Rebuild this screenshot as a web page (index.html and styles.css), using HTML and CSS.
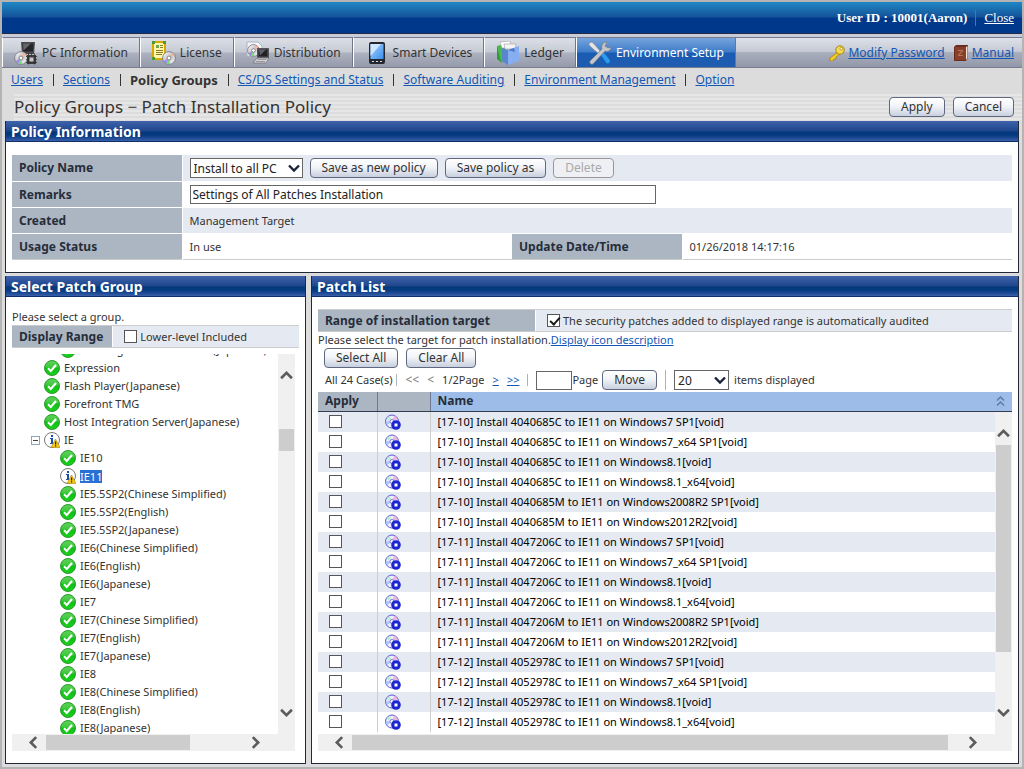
FILE: index.html
```
<!DOCTYPE html>
<html lang="en">
<head>
    <meta charset="UTF-8">
    <meta name="viewport" content="width=device-width, initial-scale=1.0">
    <title>Policy Groups - Patch Installation Policy</title>
    <link rel="stylesheet" href="styles.css">
</head>
<body>
    <!-- shared icons -->
    <svg class="defs" width="0" height="0">
        <defs>
            <linearGradient id="green" x1="0" y1="0" x2="0" y2="1">
                <stop offset="0" stop-color="#5fd35a"/>
                <stop offset=".45" stop-color="#3cc83c"/>
                <stop offset=".5" stop-color="#0fbf14"/>
                <stop offset="1" stop-color="#18d21c"/>
            </linearGradient>
            <linearGradient id="silver" x1="0" y1="0" x2="1" y2="1">
                <stop offset="0" stop-color="#ffffff"/>
                <stop offset=".5" stop-color="#c4c4ca"/>
                <stop offset="1" stop-color="#ffffff"/>
            </linearGradient>
            <linearGradient id="screen" x1="0" y1="0" x2="1" y2="1">
                <stop offset="0" stop-color="#a8d4ff"/>
                <stop offset="1" stop-color="#3a8eee"/>
            </linearGradient>
            <symbol id="ok" viewBox="0 0 16 16">
                <circle cx="8" cy="8" r="7.5" fill="url(#green)" stroke="#2c9a2c"/>
                <path d="M4 8.2l2.8 2.8L12 5" fill="none" stroke="#fff" stroke-width="2.2"/>
            </symbol>
            <symbol id="info" viewBox="0 0 16 16">
                <circle cx="8" cy="8" r="7.5" fill="#fff" stroke="#777"/>
                <path d="M7 3h2v2H7zM6 6h3v5h1v1H6v-1h1V7H6z" fill="#1450b4"/>
                <path d="M11.500 7L16 15.500H7z" fill="#f5c812" stroke="#a88400" stroke-width=".6"/>
                <path d="M11 9.500h1.200v3H11zM11 13.300h1.200v1.200H11z" fill="#222"/>
            </symbol>
            <symbol id="patch" viewBox="0 0 16 16">
                <circle cx="7" cy="7.500" r="6.500" fill="#f0ecff" stroke="#5a5ad0"/>
                <path d="M7 7.500L1.500 5A6 6 0 0 1 5 2z" fill="#b9f0d0"/>
                <path d="M7 7.500L9 1.800a6 6 0 0 1 3.600 3.400z" fill="#f0b4e4"/>
                <path d="M7 7.500L2 11a6 6 0 0 1-1-4z" fill="#a8c8ff"/>
                <circle cx="7" cy="7.500" r="2" fill="#fff" stroke="#7a7ad8"/>
                <circle cx="11" cy="11" r="4.800" fill="#1c24d0"/>
                <path d="M9.500 9.500h3v3h-3z" fill="#fff"/>
            </symbol>
            <symbol id="disc" viewBox="0 0 16 16">
                <circle cx="8" cy="8" r="7.300" fill="url(#silver)" stroke="#77777c"/>
                <path d="M8 8L2 11.500A7 7 0 0 0 5 14.400z" fill="#a486ec"/>
                <path d="M8 8l-3 6.400a7 7 0 0 0 4 .5z" fill="#78d882"/>
                <path d="M8 8l3-6.400a7 7 0 0 1 3 3z" fill="#f6b49c"/>
                <circle cx="8" cy="8" r="2.200" fill="#fff" stroke="#777"/>
            </symbol>
            <symbol id="chev" viewBox="0 0 12 12">
                <path d="M1 8.500l5-5 5 5" fill="none" stroke="#5c5c5c" stroke-width="2.400"/>
            </symbol>
            <symbol id="drop" viewBox="0 0 12 12">
                <path d="M1 3.500l5 5 5-5" fill="none" stroke="#1a2438" stroke-width="2.400"/>
            </symbol>
        </defs>
    </svg>

    <header class="header">
        <span>User ID : 10001(Aaron)</span>
        <a href="#">Close</a>
    </header>

    <nav class="tabs">
        <a href="#" class="tab">
            <svg width="24" height="24" viewBox="0 0 24 24">
                <path d="M7 1h14l-1 12H8z" fill="#4a4a4e"/>
                <path d="M8.500 2.500h11l-.6 8h-9.800z" fill="#26262a"/>
                <path d="M9 2.500h8l-7.500 7z" fill="#66666c"/>
                <path d="M7 13h13l1 3H6z" fill="#bdbdc2"/>
                <use href="#disc" x="0" y="10" width="14" height="14"/>
                <path d="M13 14h9v9h-9z" fill="#3c3c40"/>
                <path d="M15.500 16.500h4v4h-4z" fill="#c8c8cc"/>
                <path d="M14.500 12.500v11M17.500 12.500v2M20.500 12.500v11M12 15.500h3M20 15.500h3M12 18.500h3M20 18.500h3M12 21.500h11" stroke="#333" stroke-width=".8"/>
            </svg>
            PC Information
        </a>
        <a href="#" class="tab">
            <svg width="24" height="24" viewBox="0 0 24 24">
                <path d="M1 1h12v17H1z" fill="#fff6b0" stroke="#d8a800" stroke-width="2"/>
                <path d="M0 0h3v3H0zM11 0h3v3h-3zM0 16h3v3H0z" fill="#4a9a3c"/>
                <path d="M4 4h3v3H4z" fill="#6aa84f"/>
                <path d="M8 4.500h3M8 6.500h3M4 9.500h7M4 11.500h7M4 13.500h6" stroke="#8a7a20"/>
                <use href="#disc" x="10" y="10" width="14" height="14"/>
            </svg>
            License
        </a>
        <a href="#" class="tab">
            <svg width="24" height="24" viewBox="0 0 24 24">
                <path d="M1 1h11l4 4v10H1z" fill="#f4f6f8" stroke="#aab4c0"/>
                <use href="#disc" x="1" y="3" width="13" height="13"/>
                <path d="M11 7h12v10H11z" fill="#55555a"/>
                <path d="M12.500 8.500h9v7h-9z" fill="#222226"/>
                <path d="M13 8.500h7l-6 6z" fill="#606068"/>
                <path d="M11 17h12l-3 5H7z" fill="#d4d4d8" stroke="#77777c" stroke-width=".8"/>
                <path d="M11.500 18.500h9M10 20.500h9" stroke="#88888c" stroke-width=".8"/>
            </svg>
            Distribution
        </a>
        <a href="#" class="tab">
            <svg width="24" height="24" viewBox="0 0 24 24">
                <rect x="4" y="1" width="16" height="22" rx="2" fill="#24282e"/>
                <path d="M5.500 3h13v15h-13z" fill="url(#screen)"/>
                <path d="M5.500 3H16L5.500 15z" fill="#cfe6ff"/>
                <path d="M7 20.500h2M11 20.500h2M15 20.500h2" stroke="#ddd"/>
            </svg>
            Smart Devices
        </a>
        <a href="#" class="tab">
            <svg width="24" height="24" viewBox="0 0 24 24">
                <path d="M1 5l5 2v15l-5-4z" fill="#2f9a3a"/>
                <path d="M1 5l3-1 5 3v14H5z" fill="#4cb850"/>
                <path d="M4 1l10-1 1 7H6z" fill="#fff" stroke="#aaa" stroke-width=".7"/>
                <path d="M8 3l12 0-1 5H9z" fill="#f4f4f4" stroke="#aaa" stroke-width=".7"/>
                <path d="M6 7l6 2v15l-6-4z" fill="#5a86cc"/>
                <path d="M12 9l11-4v15l-11 4z" fill="#86aef0"/>
                <path d="M12 9l6-2 1 4z" fill="#4a78c8"/>
            </svg>
            Ledger
        </a>
        <a href="#" class="tab active">
            <svg width="24" height="24" viewBox="0 0 24 24">
                <path d="M1 2l3-1 3 3 6 7-2 2-7-6-3-3z" fill="#e4e4e4" stroke="#8a8a90" stroke-width=".7"/>
                <path d="M12 13l3-3 7 9c1 2-2 5-4 3z" fill="#2a9cf4" stroke="#1262b0" stroke-width=".7"/>
                <path d="M23 6c0 4-4 5-6 4L5 23c-2 1-4-1-3-3L14 8c-1-4 1-7 5-7l-2 4 3 2z" fill="#c4c6ca" stroke="#77797f" stroke-width=".7"/>
            </svg>
            Environment Setup
        </a>
        <div class="tools">
            <a href="#">
                <svg width="16" height="16" viewBox="0 0 16 16">
                    <path d="M9 7L1 13v3h3l1-2h2v-2l4-3z" fill="#f2cc2c" stroke="#a8820c" stroke-width=".8"/>
                    <circle cx="11" cy="5" r="4.200" fill="#f8dc50" stroke="#a8820c"/>
                    <circle cx="12.300" cy="3.700" r="1.300" fill="#fff" stroke="#a8820c" stroke-width=".7"/>
                </svg>
                <span>Modify Password</span>
            </a>
            <a href="#">
                <svg width="16" height="16" viewBox="0 0 16 16">
                    <path d="M1 2l2-2h12v13l-2 3H1z" fill="#6b2c1e"/>
                    <path d="M13 2l1.500-1v12L13 15z" fill="#efe6d8"/>
                    <path d="M2 2h11v13H2z" fill="#8a3e2c"/>
                    <path d="M5 5h5v1L6.500 10H10v1H5v-1l3.500-4H5z" fill="#b07848"/>
                </svg>
                <span>Manual</span>
            </a>
        </div>
    </nav>

    <nav class="subnav">
        <a href="#">Users</a>
        <a href="#">Sections</a>
        <b>Policy Groups</b>
        <a href="#">CS/DS Settings and Status</a>
        <a href="#">Software Auditing</a>
        <a href="#">Environment Management</a>
        <a href="#">Option</a>
    </nav>

    <div class="page-title">
        <h1>Policy Groups − Patch Installation Policy</h1>
        <button type="button">Apply</button>
        <button type="button">Cancel</button>
    </div>

    <main>
        <section class="panel">
            <h2>Policy Information</h2>
            <div class="panel-body">
                <table class="info">
                    <tr class="odd first">
                        <th><label for="policy">Policy Name</label></th>
                        <td colspan="3">
                            <div class="controls">
                                <span class="select policy-select">
                                    <select id="policy"><option>Install to all PC</option></select>
                                    <svg width="12" height="12"><use href="#drop"/></svg>
                                </span>
                                <button type="button">Save as new policy</button>
                                <button type="button">Save policy as</button>
                                <button type="button" disabled>Delete</button>
                            </div>
                        </td>
                    </tr>
                    <tr>
                        <th><label for="remarks">Remarks</label></th>
                        <td colspan="3"><input type="text" id="remarks" value="Settings of All Patches Installation"></td>
                    </tr>
                    <tr class="odd">
                        <th>Created</th>
                        <td colspan="3">Management Target</td>
                    </tr>
                    <tr>
                        <th>Usage Status</th>
                        <td class="third">In use</td>
                        <th>Update Date/Time</th>
                        <td class="third">01/26/2018 14:17:16</td>
                    </tr>
                </table>
            </div>
        </section>

        <div class="columns">
            <section class="panel groups">
                <h2>Select Patch Group</h2>
                <div class="panel-body">
                    <p>Please select a group.</p>
                    <div class="option-row">
                        <b>Display Range</b>
                        <label><input type="checkbox">Lower-level Included</label>
                    </div>
                    <div class="scroll-box">
                        <ul class="tree">
                            <li class="sub"><svg><use href="#ok"/></svg>Exchange Server V5.5 SP4(Japanese)</li>
                            <li><svg><use href="#ok"/></svg>Expression</li>
                            <li><svg><use href="#ok"/></svg>Flash Player(Japanese)</li>
                            <li><svg><use href="#ok"/></svg>Forefront TMG</li>
                            <li><svg><use href="#ok"/></svg>Host Integration Server(Japanese)</li>
                            <li class="open"><button type="button" class="toggle" aria-label="Collapse IE"></button><svg><use href="#info"/></svg>IE</li>
                            <li class="sub"><svg><use href="#ok"/></svg>IE10</li>
                            <li class="sub"><svg><use href="#info"/></svg><span class="selected">IE11</span></li>
                            <li class="sub"><svg><use href="#ok"/></svg>IE5.5SP2(Chinese Simplified)</li>
                            <li class="sub"><svg><use href="#ok"/></svg>IE5.5SP2(English)</li>
                            <li class="sub"><svg><use href="#ok"/></svg>IE5.5SP2(Japanese)</li>
                            <li class="sub"><svg><use href="#ok"/></svg>IE6(Chinese Simplified)</li>
                            <li class="sub"><svg><use href="#ok"/></svg>IE6(English)</li>
                            <li class="sub"><svg><use href="#ok"/></svg>IE6(Japanese)</li>
                            <li class="sub"><svg><use href="#ok"/></svg>IE7</li>
                            <li class="sub"><svg><use href="#ok"/></svg>IE7(Chinese Simplified)</li>
                            <li class="sub"><svg><use href="#ok"/></svg>IE7(English)</li>
                            <li class="sub"><svg><use href="#ok"/></svg>IE7(Japanese)</li>
                            <li class="sub"><svg><use href="#ok"/></svg>IE8</li>
                            <li class="sub"><svg><use href="#ok"/></svg>IE8(Chinese Simplified)</li>
                            <li class="sub"><svg><use href="#ok"/></svg>IE8(English)</li>
                            <li class="sub"><svg><use href="#ok"/></svg>IE8(Japanese)</li>
                        </ul>
                        <div class="vbar">
                            <svg><use href="#chev"/></svg>
                            <div class="track"><i class="thumb"></i></div>
                            <svg class="down"><use href="#chev"/></svg>
                        </div>
                    </div>
                    <div class="hbar">
                        <svg class="left"><use href="#chev"/></svg>
                        <div class="track"><i class="thumb"></i></div>
                        <svg class="right"><use href="#chev"/></svg>
                    </div>
                </div>
            </section>

            <section class="panel patches">
                <h2>Patch List</h2>
                <div class="panel-body">
                    <div class="option-row">
                        <b>Range of installation target</b>
                        <label><input type="checkbox" checked>The security patches added to displayed range is automatically audited</label>
                    </div>
                    <p>Please select the target for patch installation.<a href="#">Display icon description</a></p>
                    <div class="controls">
                        <button type="button">Select All</button>
                        <button type="button">Clear All</button>
                    </div>
                    <div class="paging">
                        <span class="cases">All 24 Case(s)</span>
                        <span class="dim">&lt;&lt;</span>
                        <span class="dim">&lt;</span>
                        <span>1/2Page</span>
                        <a href="#">&gt;</a>
                        <a href="#" class="last">&gt;&gt;</a>
                        <span class="goto"><input type="text" id="page"><label for="page">Page</label><button type="button">Move</button></span>
                        <span class="select">
                            <select id="count"><option>20</option></select>
                            <svg width="12" height="12"><use href="#drop"/></svg>
                        </span>
                        <label for="count">items displayed</label>
                    </div>
                    <table class="list list-head">
                        <colgroup><col class="c-apply"><col class="c-icon"><col></colgroup>
                        <tr>
                            <th>Apply</th>
                            <th></th>
                            <th class="sorted">
                                <div>Name
                                    <svg width="9" height="12" viewBox="0 0 9 12"><path d="M1 5.500L4.500 2 8 5.500M1 10.500L4.500 7 8 10.500" fill="none" stroke="#5d7ba8" stroke-width="1.500"/></svg>
                                </div>
                            </th>
                        </tr>
                    </table>
                    <div class="scroll-box">
                        <div class="rows">
                            <table class="list">
                                <colgroup><col class="c-apply"><col class="c-icon"><col></colgroup>
                                <tr><td><input type="checkbox" id="p1"></td><td><svg><use href="#patch"/></svg></td><td><label for="p1">[17-10] Install 4040685C to IE11 on Windows7 SP1[void]</label></td></tr>
                                <tr><td><input type="checkbox" id="p2"></td><td><svg><use href="#patch"/></svg></td><td><label for="p2">[17-10] Install 4040685C to IE11 on Windows7_x64 SP1[void]</label></td></tr>
                                <tr><td><input type="checkbox" id="p3"></td><td><svg><use href="#patch"/></svg></td><td><label for="p3">[17-10] Install 4040685C to IE11 on Windows8.1[void]</label></td></tr>
                                <tr><td><input type="checkbox" id="p4"></td><td><svg><use href="#patch"/></svg></td><td><label for="p4">[17-10] Install 4040685C to IE11 on Windows8.1_x64[void]</label></td></tr>
                                <tr><td><input type="checkbox" id="p5"></td><td><svg><use href="#patch"/></svg></td><td><label for="p5">[17-10] Install 4040685M to IE11 on Windows2008R2 SP1[void]</label></td></tr>
                                <tr><td><input type="checkbox" id="p6"></td><td><svg><use href="#patch"/></svg></td><td><label for="p6">[17-10] Install 4040685M to IE11 on Windows2012R2[void]</label></td></tr>
                                <tr><td><input type="checkbox" id="p7"></td><td><svg><use href="#patch"/></svg></td><td><label for="p7">[17-11] Install 4047206C to IE11 on Windows7 SP1[void]</label></td></tr>
                                <tr><td><input type="checkbox" id="p8"></td><td><svg><use href="#patch"/></svg></td><td><label for="p8">[17-11] Install 4047206C to IE11 on Windows7_x64 SP1[void]</label></td></tr>
                                <tr><td><input type="checkbox" id="p9"></td><td><svg><use href="#patch"/></svg></td><td><label for="p9">[17-11] Install 4047206C to IE11 on Windows8.1[void]</label></td></tr>
                                <tr><td><input type="checkbox" id="p10"></td><td><svg><use href="#patch"/></svg></td><td><label for="p10">[17-11] Install 4047206C to IE11 on Windows8.1_x64[void]</label></td></tr>
                                <tr><td><input type="checkbox" id="p11"></td><td><svg><use href="#patch"/></svg></td><td><label for="p11">[17-11] Install 4047206M to IE11 on Windows2008R2 SP1[void]</label></td></tr>
                                <tr><td><input type="checkbox" id="p12"></td><td><svg><use href="#patch"/></svg></td><td><label for="p12">[17-11] Install 4047206M to IE11 on Windows2012R2[void]</label></td></tr>
                                <tr><td><input type="checkbox" id="p13"></td><td><svg><use href="#patch"/></svg></td><td><label for="p13">[17-12] Install 4052978C to IE11 on Windows7 SP1[void]</label></td></tr>
                                <tr><td><input type="checkbox" id="p14"></td><td><svg><use href="#patch"/></svg></td><td><label for="p14">[17-12] Install 4052978C to IE11 on Windows7_x64 SP1[void]</label></td></tr>
                                <tr><td><input type="checkbox" id="p15"></td><td><svg><use href="#patch"/></svg></td><td><label for="p15">[17-12] Install 4052978C to IE11 on Windows8.1[void]</label></td></tr>
                                <tr><td><input type="checkbox" id="p16"></td><td><svg><use href="#patch"/></svg></td><td><label for="p16">[17-12] Install 4052978C to IE11 on Windows8.1_x64[void]</label></td></tr>
                            </table>
                        </div>
                        <div class="vbar">
                            <svg><use href="#chev"/></svg>
                            <div class="track"><i class="thumb"></i></div>
                            <svg class="down"><use href="#chev"/></svg>
                        </div>
                    </div>
                    <div class="hbar">
                        <svg class="left"><use href="#chev"/></svg>
                        <div class="track"><i class="thumb"></i></div>
                        <svg class="right"><use href="#chev"/></svg>
                    </div>
                </div>
            </section>
        </div>
    </main>
</body>
</html>
```
FILE: styles.css
```
* {
    box-sizing: border-box;
    margin: 0;
    padding: 0;
}
body {
    display: flex;
    flex-direction: column;
    height: 100vh;
    min-height: 600px;
    border: 2px solid #b4b4b4;
    background-color: #dcdcdc;
    font: 11px/16px "Noto Sans", "Open Sans", sans-serif;
    color: #333;
    overflow: hidden;
}
.defs {
    position: absolute;
}
a {
    color: #1257b4;
}
svg {
    flex: none;
}

/* header */
.header {
    display: flex;
    justify-content: flex-end;
    align-items: center;
    gap: 8px;
    height: 32px;
    padding-right: 8px;
    background: linear-gradient(#1f87c4, #15539a 48%, #00398b 52%, #00398b);
    border-bottom: 1px solid #222c48;
    font: bold 13px "Liberation Serif", serif;
    color: #fff;
}
.header a {
    color: #fff;
    padding-left: 8px;
    border-left: 1px solid #3b78bc;
    font-weight: normal;
}

/* main tabs */
.tabs {
    display: flex;
    height: 34px;
    border-top: 3px solid #c9cbd8;
    border-bottom: 1px solid #777e90;
    background: linear-gradient(#dfe2ea, #c6cad4 48%, #a9aebd 52%, #9298a9);
}
.tab {
    display: flex;
    align-items: center;
    gap: 4px;
    padding: 0 11px;
    border-top: 1px solid #747a90;
    border-right: 1px solid #6f7688;
    border-left: 1px solid #fff;
    background: linear-gradient(#dcdfe7, #c6cad4 48%, #adb2c0 52%, #949aab);
    color: #333;
    font-size: 12px;
    text-decoration: none;
}
.tab.active {
    background: linear-gradient(#76a4dd, #3f7cc8 48%, #1a5cb4 52%, #1f5cb0);
    color: #fff;
}
.tools {
    display: flex;
    flex: 1;
    justify-content: flex-end;
    align-items: center;
    gap: 8px;
    padding-right: 8px;
    border-top: 1px solid #747a90;
    font-size: 12px;
}
.tools a {
    display: flex;
    align-items: center;
    gap: 3px;
}

/* sub navigation */
.subnav {
    display: flex;
    align-items: center;
    height: 24px;
    padding-left: 9px;
    font-size: 12px;
    line-height: 12px;
}
.subnav > * + * {
    margin-left: 10px;
    padding-left: 9px;
    border-left: 1px solid #333;
}
.subnav b {
    font-size: 13px;
}

.page-title {
    display: flex;
    align-items: center;
    gap: 8px;
    height: 29px;
    margin-left: 12px;
    padding-right: 8px;
    background: repeating-linear-gradient(#dcdcdc 0 2px, #e6e6e6 2px 4px);
}
.page-title h1 {
    flex: 1;
    font-size: 17px;
    font-weight: normal;
}

/* form controls */
button {
    height: 20px;
    padding: 0 11px;
    border: 1px solid #5f6880;
    border-radius: 4px;
    background: linear-gradient(#fff, #f2f4f8 45%, #c8d0df);
    font: 12px/16px "Noto Sans", "Open Sans", sans-serif;
    color: #333;
}
button:disabled {
    border-color: #999;
    background: #eef0f4;
    color: #aaa;
}
.select {
    display: inline-grid;
    align-items: center;
}
.select > * {
    grid-area: 1 / 1;
}
.select svg {
    justify-self: end;
    margin-right: 3px;
    pointer-events: none;
}
select {
    appearance: none;
    height: 20px;
    padding: 0 3px;
    border: 1px solid #666;
    background-color: #fff;
    font: 12px "Noto Sans", "Open Sans", sans-serif;
    color: #222;
}
input[type="text"] {
    height: 19px;
    padding: 0 2px;
    border: 1px solid #666;
    background-color: #fff;
    font: 12px "Noto Sans", "Open Sans", sans-serif;
    color: #222;
}
input[type="checkbox"] {
    appearance: none;
    display: block;
    flex: none;
    width: 13px;
    height: 13px;
    border: 1px solid #555;
    background-color: #fff;
}
input[type="checkbox"]:checked::before {
    content: "";
    display: block;
    width: 4px;
    height: 8px;
    margin-left: 4px;
    border: solid #1a1a1a;
    border-width: 0 2px 2px 0;
    transform: rotate(42deg);
}
.controls {
    display: flex;
    align-items: center;
    gap: 8px;
}

/* panels */
main {
    display: flex;
    flex-direction: column;
    flex: 1;
    gap: 3px;
    min-height: 0;
    padding: 0 3px 3px;
}
.columns {
    display: flex;
    flex: 1;
    gap: 5px;
    min-height: 0;
}
.panel {
    display: flex;
    flex-direction: column;
    min-width: 0;
    border: 1px solid #232838;
    border-top: 0;
    background-color: #fff;
}
.panel h2 {
    height: 21px;
    padding-left: 5px;
    border-bottom: 1px solid #0f2f6c;
    background: linear-gradient(#3f63aa, #1e458c 50%, #003878 55%, #0a3c86 75%, #3a5fa8);
    font-size: 14px;
    line-height: 21px;
    color: #fff;
}
.panel-body {
    display: flex;
    flex-direction: column;
    flex: 1;
    min-height: 0;
    padding: 12px 6px;
}
.info {
    width: 100%;
    border-collapse: collapse;
    border-top: 1px solid #ccc;
    border-bottom: 1px solid #ccc;
}
.info th,
.info td {
    height: 26px;
    padding: 0 7px;
    border-top: 1px solid #fff;
    text-align: left;
}
.info .first th,
.info .first td {
    height: 27px;
}
.info th {
    width: 170px;
    border-right: 1px solid #fff;
    background-color: #acb6c2;
    font-size: 12px;
    color: #262d3a;
}
.info .third {
    width: 33%;
}
.info .odd td {
    background-color: #e5e9f1;
}
.info input {
    display: block;
    width: 466px;
}
.info .controls {
    gap: 7px;
}
.policy-select {
    width: 113px;
}

.groups {
    width: 301px;
}
.patches {
    flex: 1;
}
.groups p {
    line-height: 17px;
}
.option-row {
    display: flex;
    border: 1px solid #ccc;
    border-width: 1px 0;
    background-color: #e5e9f1;
    line-height: 21px;
}
.option-row b {
    padding: 0 9px 0 7px;
    border-right: 1px solid #fff;
    background-color: #acb6c2;
    font-size: 12px;
    color: #262d3a;
}
.option-row label {
    display: flex;
    align-items: center;
    gap: 3px;
    padding-left: 11px;
}
.patches .option-row b {
    width: 218px;
}
.patches p {
    line-height: 16px;
}
.patches .controls {
    padding-left: 6px;
}

.scroll-box {
    display: flex;
    flex: 1;
    min-height: 0;
}
.groups .panel-body {
    padding-top: 11px;
}
.groups .scroll-box {
    margin: 6px 4px 0 0;
    overflow: hidden;
}
.tree {
    flex: 1;
    margin-top: -13px; /* scrolled position */
    list-style: none;
    white-space: nowrap;
}
.tree li {
    display: flex;
    align-items: center;
    gap: 4px;
    height: 18px;
    padding-left: 32px;
}
.tree .sub {
    padding-left: 48px;
}
.tree .open {
    padding-left: 19px;
}
.tree svg,
.rows svg {
    display: block;
    width: 16px;
    height: 16px;
}
.toggle {
    width: 9px;
    height: 9px;
    padding: 0 1px;
    border-color: #8aa4c4;
    border-radius: 0;
    background: linear-gradient(#444, #444) center / 5px 1px no-repeat #fff;
}
.selected {
    background-color: #2a6fd4;
    color: #fff;
    line-height: 13px;
}

/* scroll bars */
.vbar,
.hbar {
    display: flex;
    align-items: center;
    background-color: #f0f0f0;
}
.vbar {
    flex-direction: column;
    width: 17px;
    padding: 15px 0;
}
.hbar {
    height: 17px;
    padding: 0 33px 0 15px;
}
.groups .hbar {
    margin-right: 4px;
}
.vbar svg,
.hbar svg {
    width: 13px;
    height: 13px;
}
.down {
    transform: rotate(180deg);
}
.left {
    transform: rotate(-90deg);
}
.right {
    transform: rotate(90deg);
}
.track {
    display: flex;
    flex: 1;
    width: 15px;
}
.hbar .track {
    height: 15px;
    margin: 0 6px;
}
.vbar .track {
    flex-direction: column;
    margin: 5px 0;
}
.thumb {
    background-color: #cdcdcd;
}
.groups .vbar .thumb {
    height: 7%;
    margin-top: 42px;
}
.groups .hbar .thumb {
    width: 73%;
}
.patches .vbar .thumb {
    height: 81%;
}
.patches .hbar .thumb {
    width: 98%;
}

/* patch list */
.paging {
    display: flex;
    align-items: center;
    gap: 8px;
    height: 24px;
    padding-left: 7px;
}
.cases,
.last {
    line-height: 12px;
    padding-right: 4px;
    border-right: 1px solid #aab2c0;
}
.last {
    padding-right: 8px;
}
.dim {
    font-size: 12px;
    color: #777;
}
.goto {
    display: flex;
    align-items: center;
    padding-right: 8px;
    border-right: 1px solid #aab2c0;
    line-height: 12px;
}
.goto input {
    width: 36px;
}
.goto button {
    margin-left: 4px;
}
.paging .select {
    width: 55px;
}
.paging > label {
    margin-left: -3px;
}
.list {
    width: 100%;
    border-collapse: collapse;
    table-layout: fixed;
}
.c-apply {
    width: 59px;
}
.c-icon {
    width: 53px;
}
.list th {
    height: 19px;
    padding: 0 7px;
    border-right: 1px solid #6f7a90;
    border-bottom: 1px solid #333c50;
    background-color: #acb6c2;
    font-size: 12px;
    line-height: 18px;
    text-align: left;
    color: #262d3a;
}
.list .sorted {
    border-right: 0;
    background-color: #9dbde8;
}
.sorted div {
    display: flex;
    justify-content: space-between;
    align-items: center;
}
.rows {
    flex: 1;
    overflow: hidden;
}
.list td {
    height: 20px;
    padding: 0 7px;
    border-right: 1px solid #ccc;
    color: #000;
}
.list td:first-child {
    padding-left: 11px;
}
.list td:last-child {
    border-right: 0;
}
.list tr:nth-child(odd) td {
    background-color: #e5e9f1;
}
```
